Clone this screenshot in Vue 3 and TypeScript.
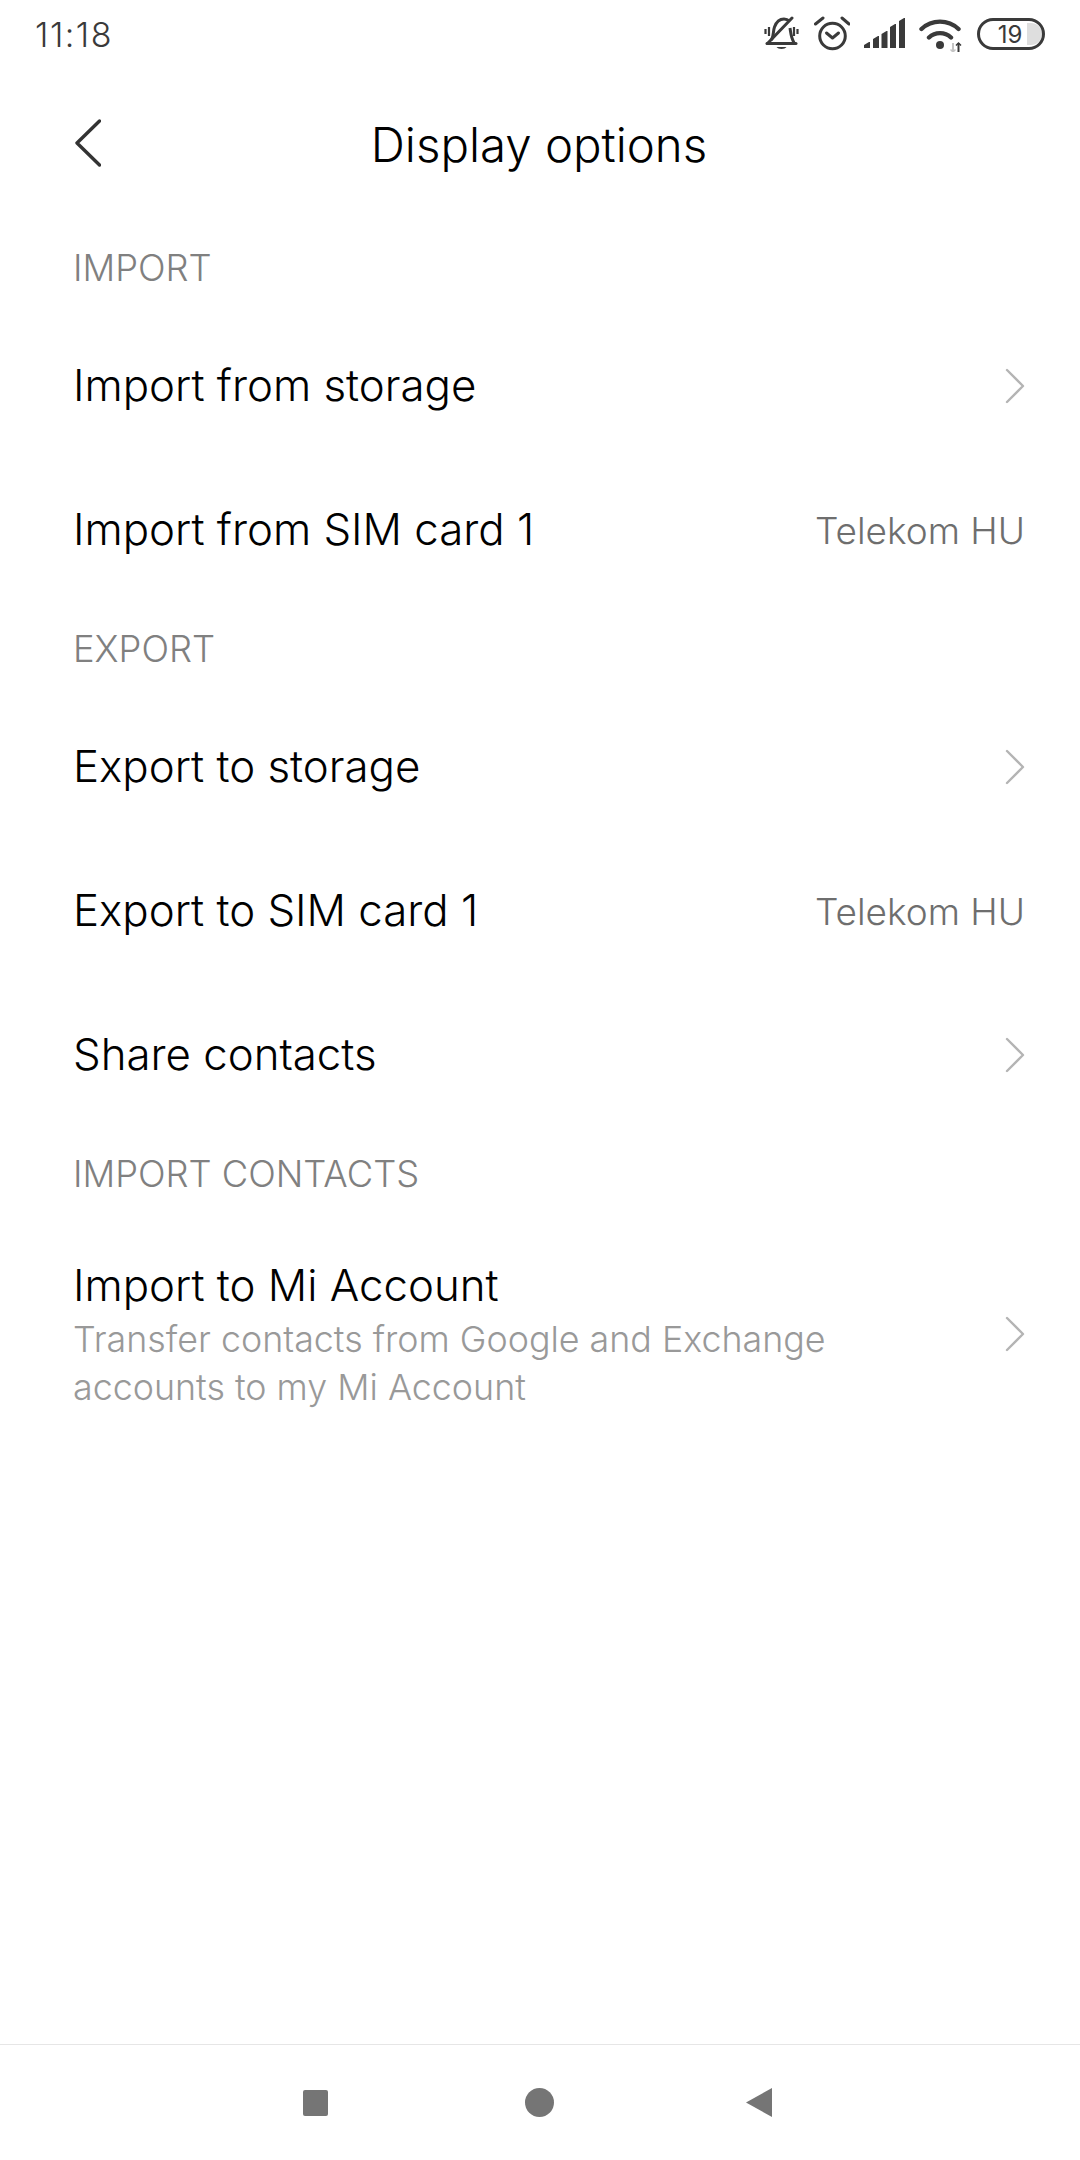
<script setup lang="ts">
interface Row {
  title: string
  value?: string
  desc?: string[]
}
interface Section {
  label: string
  rows: Row[]
}

const sections: Section[] = [
  {
    label: 'IMPORT',
    rows: [
      { title: 'Import from storage' },
      { title: 'Import from SIM card 1', value: 'Telekom HU' },
    ],
  },
  {
    label: 'EXPORT',
    rows: [
      { title: 'Export to storage' },
      { title: 'Export to SIM card 1', value: 'Telekom HU' },
      { title: 'Share contacts' },
    ],
  },
  {
    label: 'IMPORT CONTACTS',
    rows: [
      {
        title: 'Import to Mi Account',
        desc: ['Transfer contacts from Google and Exchange', 'accounts to my Mi Account'],
      },
    ],
  },
]
</script>

<template>
  <div class="screen">
    <div class="status-bar">
      <span class="clock">11:18</span>
      <div class="status-icons">
        <svg width="36" height="36" viewBox="0 0 36 36" fill="none" stroke="#3a3a3a" stroke-width="3">
          <path d="M7.500 24C10 19 9 15 10.500 11 12.500 5.500 16 3 20 3c2.500 0 4 .8 5.500 2.200M26 12c1 6 1 10 4 14.500" stroke-linejoin="round" />
          <path d="M3 27.500h29" stroke-linecap="round" />
          <path d="M3.500 27.500 28 2" stroke-linecap="round" />
          <path d="M12.500 31h10c-1.500 2.500-8.500 2.500-10 0z" fill="#3a3a3a" stroke="none" />
          <path d="M1.500 13v5M5 11v9M30 11v9M33.500 13v5" stroke-width="2.200" />
        </svg>
        <svg width="36" height="36" viewBox="0 0 36 36" fill="none" stroke="#3a3a3a" stroke-width="3">
          <circle cx="18.500" cy="20" r="12.800" />
          <path d="M12.500 17l6 5 6-5" stroke-linecap="round" stroke-linejoin="round" />
          <path d="M1.500 8 9 2M28 2l7 6" stroke-linecap="round" />
        </svg>
        <svg width="41" height="36" viewBox="0 0 41 36" fill="#3a3a3a">
          <path d="M0 32v-3l5-3h1v6zM9 32v-9l5-3h1v12zM17.500 32V18l5-3h1v17zM26 32V11l5-3h1v24zM35 32V5l5-3h1v30z" />
        </svg>
        <svg width="44" height="36" viewBox="0 0 44 36" fill="none" stroke="#3a3a3a" stroke-width="4.400">
          <path d="M2.500 13A27 27 0 0 1 39.500 13M10 21.500A16 16 0 0 1 32 21.500" stroke-linecap="round" />
          <circle cx="21" cy="29" r="4" fill="#3a3a3a" stroke="none" />
          <path d="M39.500 27v9" stroke-width="2" />
          <path d="M37 29.500l2.500-2.500 2.500 2.500" stroke-width="1.500" />
          <path d="M34 27v9" stroke="#c4c4c4" stroke-width="2" />
          <path d="M31.500 33.500l2.500 2.500 2.500-2.500" stroke="#c4c4c4" stroke-width="1.500" />
        </svg>
        <svg width="68" height="36" viewBox="0 0 68 36" fill="none">
          <path d="M50 7h4a11 11 0 0 1 0 22h-4z" fill="#dedede" />
          <rect x="1.500" y="3.500" width="65" height="29" rx="14.500" stroke="#3a3a3a" stroke-width="3" />
          <text x="33" y="26.500" text-anchor="middle" class="batt-num">19</text>
        </svg>
      </div>
    </div>

    <header class="title-bar">
      <svg class="back" width="26" height="48" viewBox="0 0 26 48" fill="none" stroke="#333" stroke-width="3.4" stroke-linecap="round" stroke-linejoin="round">
        <path d="M24.500 2 2 24l22.500 22" />
      </svg>
      <h1 class="title">Display options</h1>
    </header>

    <main class="content">
      <section v-for="section in sections" :key="section.label">
        <div class="section-label">{{ section.label }}</div>
        <div
          v-for="row in section.rows"
          :key="row.title"
          class="row"
          :class="{ 'row-tall': row.desc }"
        >
          <div class="row-text">
            <div class="row-title">{{ row.title }}</div>
            <div v-for="line in row.desc" :key="line" class="row-desc">{{ line }}</div>
          </div>
          <span v-if="row.value" class="row-value">{{ row.value }}</span>
          <svg v-else class="chev" width="20" height="36" viewBox="0 0 20 36" fill="none" stroke="#b4b4b4" stroke-width="2.4" stroke-linecap="round" stroke-linejoin="round">
            <path d="M2 2l16 16L2 34" />
          </svg>
        </div>
      </section>
    </main>

    <nav class="nav-bar">
      <span class="nav-square"></span>
      <span class="nav-circle"></span>
      <svg width="26" height="29" viewBox="0 0 26 29" fill="#757575">
        <path d="M26 0v29L0 14.500z" />
      </svg>
    </nav>
  </div>
</template>

<style scoped>
.screen {
  width: 1080px;
  height: 2160px;
  display: flex;
  flex-direction: column;
  background: #fff;
  font-family: "Inter", "Liberation Sans", sans-serif;
  font-weight: 300;
  color: #000;
  overflow: hidden;
}

.status-bar {
  height: 68px;
  flex: none;
  display: flex;
  align-items: center;
  justify-content: space-between;
  padding: 0 35px;
}

.clock {
  font-size: 34px;
  letter-spacing: 1.500px;
  color: #3a3a3a;
}

.status-icons {
  display: flex;
  align-items: center;
  gap: 14px;
}

.batt-num {
  font-family: "Inter", "Liberation Sans", sans-serif;
  font-size: 24px;
  font-weight: 400;
  fill: #3a3a3a;
}

.title-bar {
  height: 153px;
  flex: none;
  position: relative;
  display: flex;
  align-items: center;
  justify-content: center;
  padding-right: 2px;
}

.back {
  position: absolute;
  left: 75px;
  top: 51px;
}

.title {
  margin: 0;
  font-size: 47.400px;
  font-weight: 300;
}

.content {
  flex: 1;
  padding: 0 55px 0 73px;
}

.section-label {
  font-size: 36.300px;
  line-height: 45px;
  color: #808080;
  padding-top: 25px;
  height: 68px;
}

.row {
  min-height: 144px;
  display: flex;
  align-items: center;
  justify-content: space-between;
}

.row-tall {
  padding-top: 37px;
}

.row-title {
  font-size: 43.800px;
  line-height: 58px;
}

.row-desc {
  font-size: 35.800px;
  line-height: 48px;
  color: #999;
}

.row-value {
  font-size: 37px;
  color: #6e6e6e;
}

.chev {
  flex: none;
}

.nav-bar {
  height: 115px;
  flex: none;
  border-top: 1px solid #e6e6e6;
  display: flex;
  align-items: center;
  justify-content: center;
  gap: 192px;
  padding-right: 5px;
}

.nav-square {
  width: 25px;
  height: 26px;
  margin-right: 5px;
  border-radius: 2px;
  background: #757575;
}

.nav-circle {
  width: 29px;
  height: 29px;
  border-radius: 50%;
  background: #757575;
}
</style>
